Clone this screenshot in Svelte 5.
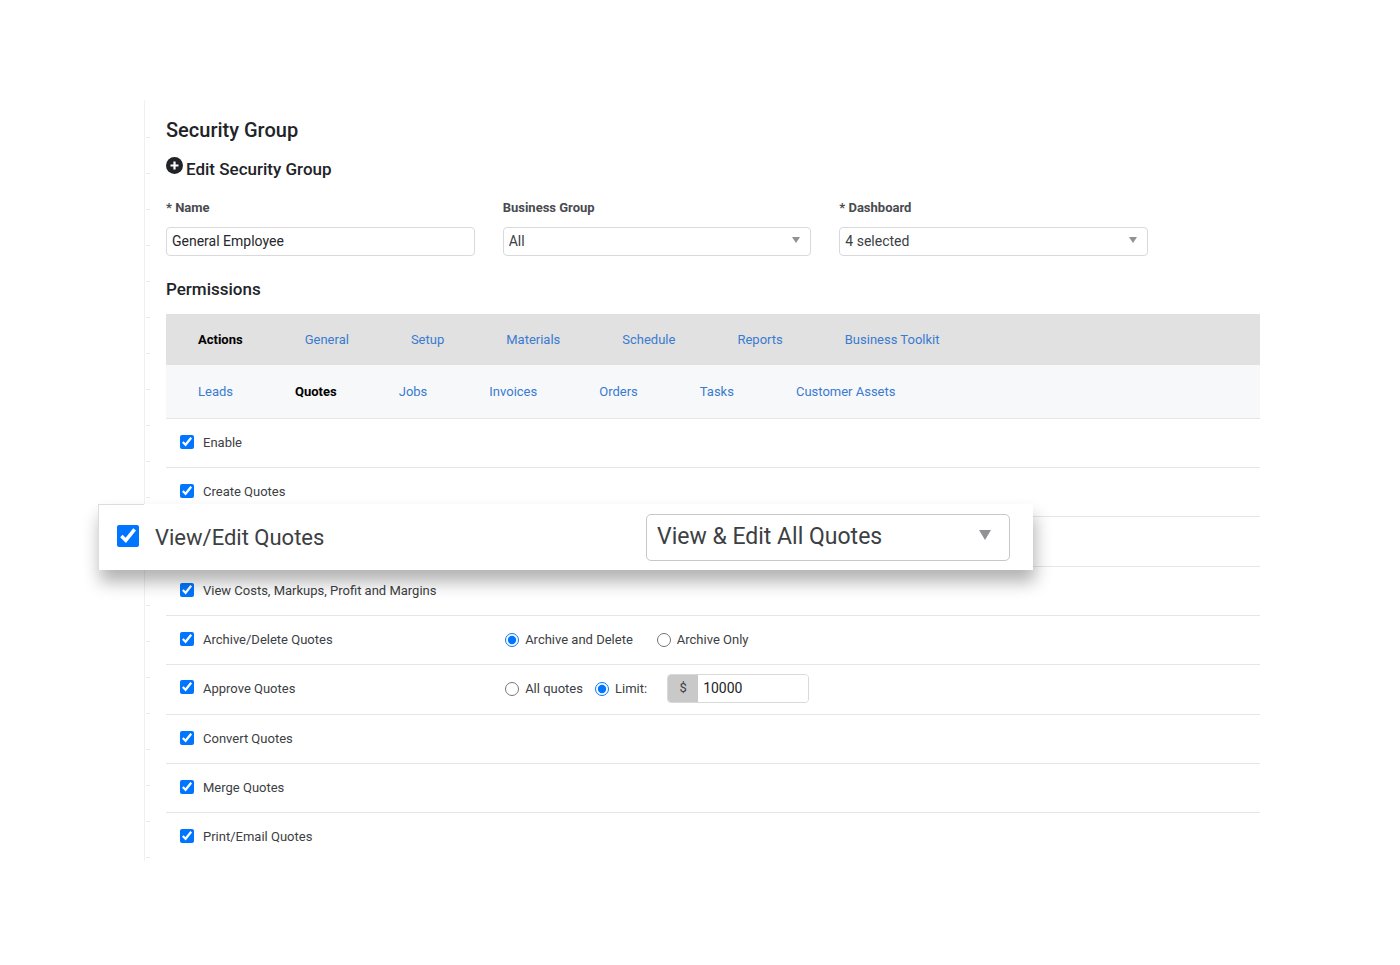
<script lang="ts">
  type Permission = {
    id: string;
    label: string;
    kind?: 'access' | 'archive' | 'approve';
  };

  const groups = ['Actions', 'General', 'Setup', 'Materials', 'Schedule', 'Reports', 'Business Toolkit'];
  const sections = ['Leads', 'Quotes', 'Jobs', 'Invoices', 'Orders', 'Tasks', 'Customer Assets'];

  const permissions: Permission[] = [
    { id: 'enable', label: 'Enable' },
    { id: 'create', label: 'Create Quotes' },
    { id: 'view-edit', label: 'View/Edit Quotes', kind: 'access' },
    { id: 'costs', label: 'View Costs, Markups, Profit and Margins' },
    { id: 'archive', label: 'Archive/Delete Quotes', kind: 'archive' },
    { id: 'approve', label: 'Approve Quotes', kind: 'approve' },
    { id: 'convert', label: 'Convert Quotes' },
    { id: 'merge', label: 'Merge Quotes' },
    { id: 'print', label: 'Print/Email Quotes' }
  ];

  let activeGroup = $state('Actions');
  let activeSection = $state('Quotes');
  let enabled: Record<string, boolean> = $state(
    Object.fromEntries(permissions.map((p) => [p.id, true]))
  );

  let name = $state('General Employee');
  let archiveMode = $state('delete');
  let approveMode = $state('limit');
  let limit = $state('10000');

  function pick(event: MouseEvent, set: () => void) {
    event.preventDefault();
    set();
  }
</script>

<main class="panel">
  <h1>Security Group</h1>
  <h2 class="edit-title">
    <svg viewBox="0 0 17 17" width="17" height="17" aria-hidden="true">
      <circle cx="8.5" cy="8.5" r="8.5" fill="#212328" />
      <path d="M8.5 4.5v8M4.5 8.5h8" stroke="#fff" stroke-width="2.2" />
    </svg>
    Edit Security Group
  </h2>

  <div class="fields">
    <div class="field">
      <label for="name">* Name</label>
      <input id="name" class="control" type="text" bind:value={name} />
    </div>
    <div class="field">
      <label for="business-group">Business Group</label>
      <div class="select">
        <select id="business-group" class="control"><option>All</option></select>
      </div>
    </div>
    <div class="field">
      <label for="dashboard">* Dashboard</label>
      <div class="select">
        <select id="dashboard" class="control"><option>4 selected</option></select>
      </div>
    </div>
  </div>

  <h2>Permissions</h2>

  <nav class="tabs groups">
    {#each groups as group}
      <a href="#{group}" class:active={group === activeGroup} onclick={(e) => pick(e, () => (activeGroup = group))}>{group}</a>
    {/each}
  </nav>
  <nav class="tabs sections">
    {#each sections as section}
      <a href="#{section}" class:active={section === activeSection} onclick={(e) => pick(e, () => (activeSection = section))}>{section}</a>
    {/each}
  </nav>

  <div class="rows">
    {#each permissions as permission (permission.id)}
      <div class="row" class:tall={permission.kind === 'access' || permission.kind === 'approve'}>
        {#if permission.kind === 'access'}
          <div class="callout">
            <label class="check">
              <input type="checkbox" bind:checked={enabled[permission.id]} />
              {permission.label}
            </label>
            <div class="select">
              <select class="control" aria-label="Quote access"><option>View &amp; Edit All Quotes</option></select>
            </div>
          </div>
        {:else}
          <label class="check">
            <input type="checkbox" bind:checked={enabled[permission.id]} />
            {permission.label}
          </label>
        {/if}

        {#if permission.kind === 'archive'}
          <div class="options wide">
            <label><input type="radio" name="archive" value="delete" bind:group={archiveMode} /> Archive and Delete</label>
            <label><input type="radio" name="archive" value="archive" bind:group={archiveMode} /> Archive Only</label>
          </div>
        {:else if permission.kind === 'approve'}
          <div class="options">
            <label><input type="radio" name="approve" value="all" bind:group={approveMode} /> All quotes</label>
            <label><input type="radio" name="approve" value="limit" bind:group={approveMode} /> Limit:</label>
            <div class="money">
              <span>$</span>
              <input type="text" aria-label="Approval limit" bind:value={limit} />
            </div>
          </div>
        {/if}
      </div>
    {/each}
  </div>
</main>

<style>
  :global(body) { background: #fff; }

  .panel {
    margin: 100px 140px 0 144px;
    padding: 18px 0 0 21px;
    border-left: 1px solid #f0f0f2;
    /* ruler marks down the left edge, none at the very top */
    background:
      linear-gradient(#fff, #fff) 0 0 / 100% 4px no-repeat,
      linear-gradient(#e8e9ec 1px, transparent 1px) 1px 1px / 4px 36px repeat-y;
    color: #3c4043;
    font-family: Roboto, "Liberation Sans", sans-serif;
    font-size: 13px;
    line-height: 20px;
  }

  h1, h2 { margin: 0; color: #212328; font-weight: 500; }
  h1 { font-size: 20px; line-height: 24px; }
  h2 { font-size: 17px; line-height: 24px; }
  .edit-title { display: flex; gap: 3px; margin-top: 15px; }

  .fields { display: grid; grid-template-columns: repeat(3, 1fr); gap: 28px; margin: 17px 112px 21px 0; }
  .field > label { display: block; margin-bottom: 9px; color: #494b50; font-weight: 700; }

  .control {
    box-sizing: border-box;
    display: block;
    width: 100%;
    height: 29px;
    padding: 0 5px 1px;
    border: 1px solid #d9d9dc;
    border-radius: 4px;
    background: #fff;
    color: #26282c;
    font: inherit;
    font-size: 14px;
    appearance: none;
  }

  .select { position: relative; }
  .select::after {
    content: '';
    position: absolute;
    top: 10px;
    right: 11px;
    border: 4px solid transparent;
    border-top: 6px solid #919295;
    border-bottom: 0;
    pointer-events: none;
  }
  .select .control { color: #3c4043; }

  .tabs { display: flex; align-items: center; gap: 62px; padding: 0 32px; }
  .tabs a { color: #3a7bd0; text-decoration: none; }
  .tabs .active { color: #000; font-weight: 700; }
  .groups { height: 51px; margin-top: 13px; background: #e1e1e1; }
  .sections { height: 53px; background: #f7f8fa; }

  .row {
    position: relative;
    display: grid;
    grid-template-columns: 31% 1fr;
    align-items: center;
    height: 48px;
    border-top: 1px solid #e6e6e8;
  }
  .row.tall { height: 47px; padding-bottom: 2px; }

  .check { display: flex; align-items: center; gap: 9px; padding-left: 14px; white-space: nowrap; }
  .check input { width: 14px; height: 14px; margin: 0 0 3px; accent-color: #0075ff; }

  .options { display: flex; align-items: center; gap: 12px; }
  .options.wide { gap: 24px; }
  .options label { display: flex; align-items: center; gap: 6px; }
  .options input[type='radio'] { width: 14px; height: 14px; margin: 0; accent-color: #0075ff; }

  .money {
    display: flex;
    width: 140px;
    height: 27px;
    margin-left: 8px;
    border: 1px solid #d9d9dc;
    border-radius: 4px;
    overflow: hidden;
  }
  .money span { width: 30px; background: #c9c9c9; line-height: 26px; text-align: center; }
  .money input { flex: 1; min-width: 0; padding: 0 5px 1px; border: 0; color: #212328; font: inherit; font-size: 14px; }

  /* enlarged row lifted above the list */
  .callout {
    position: absolute;
    z-index: 1;
    top: -13px;
    right: 227px;
    left: -68px;
    display: grid;
    grid-template-columns: 1fr 364px;
    align-items: center;
    height: 66px;
    padding-right: 23px;
    border-left: 1px solid #dcdcdc;
    background: linear-gradient(#dcdcdc, #dcdcdc) 0 0 / 45px 1px no-repeat #fff;
    box-shadow: 2px 12px 16px rgba(0, 0, 0, 0.3);
  }
  .callout .check { gap: 16px; padding: 2px 0 0 18px; font-size: 22px; line-height: 28px; }
  .callout .check input { width: 22px; height: 22px; margin-bottom: 5px; }
  .callout .control { height: 47px; padding: 0 10px; border-color: #c8c8ca; border-radius: 5px; font-size: 23px; line-height: 32px; }
  .callout .select::after { top: 16px; right: 19px; border-width: 10px 6px 0; }
</style>
